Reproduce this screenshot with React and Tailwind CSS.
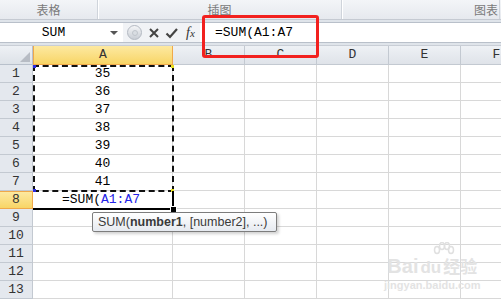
const mono = { fontFamily: '"Liberation Mono", "DejaVu Sans Mono", monospace' };

const cols = [
  { name: 'A', w: 'w-[140px]' },
  { name: 'B', w: 'w-[72px]' },
  { name: 'C', w: 'w-[72px]' },
  { name: 'D', w: 'w-[72px]' },
  { name: 'E', w: 'w-[72px]' },
  { name: 'F', w: 'w-[72px]' },
];

const values = [35, 36, 37, 38, 39, 40, 41];

function Ribbon() {
  return (
    <div className="flex h-[20px] border-b border-[#c5cad2] bg-gradient-to-b from-[#f3f5f8] to-[#e6e9ee] text-[12px] text-[#7a7a7a] font-['Noto_Sans_CJK_SC',sans-serif]">
      <div className="w-[98px] flex items-center justify-center border-r border-[#cfd4db] shadow-[1px_0_0_#fff]">表格</div>
      <div className="w-[244px] flex items-center justify-center border-r border-[#cfd4db] shadow-[1px_0_0_#fff]">插图</div>
      <div className="w-[158px] flex items-center justify-end pr-[1px] border-r border-[#cfd4db]">图表</div>
    </div>
  );
}

function FormulaBar() {
  return (
    <div className="flex h-[26px] py-[2px] bg-[#dfe4ea] border-b border-[#c9ced6]">
      <div className="w-[123px] bg-white border-y border-[#b9c0ca] flex items-center relative" style={mono}>
        <span className="flex-1 text-center text-[13px] text-black pr-[16px]">SUM</span>
        <span className="absolute right-[5px] top-[8px] w-0 h-0 border-l-[4px] border-r-[4px] border-t-[4px] border-l-transparent border-r-transparent border-t-[#555]" />
      </div>
      <div className="w-[77px] flex items-center bg-[#f1f3f6] border-y border-[#b9c0ca]">
        <div className="ml-[4px] w-[15px] h-[15px] rounded-full bg-gradient-to-b from-[#f4f5f7] to-[#c9ced5] border border-[#b3b9c2] flex items-center justify-center">
          <div className="w-[6px] h-[6px] rounded-full bg-[#d9dde2] border border-[#c0c5cc]" />
        </div>
        <svg width="12" height="12" viewBox="0 0 12 12" className="ml-[6px]">
          <path d="M2 2 L10 10 M10 2 L2 10" stroke="#444" strokeWidth="2" />
        </svg>
        <svg width="13" height="12" viewBox="0 0 13 12" className="ml-[5px]">
          <path d="M1.5 6.5 L5 10 L12 2" stroke="#444" strokeWidth="2.2" fill="none" />
        </svg>
        <span className="ml-[8px] text-[14px] italic text-[#333] font-['Liberation_Serif',serif] leading-none">
          f<span className="text-[11px]">x</span>
        </span>
      </div>
      <div className="flex-1 bg-white border-y border-[#b9c0ca] flex items-center pl-[15px] text-[13px] text-black" style={mono}>
        =SUM(A1:A7
      </div>
    </div>
  );
}

function Grid() {
  return (
    <div className="relative" style={mono}>
      <div className="flex h-[19px] text-[13px] text-[#333]">
        <div className="w-[33px] shrink-0 bg-gradient-to-b from-[#eef1f5] to-[#dde2e8] border-r border-b border-[#b8c0cb] relative">
          <svg width="10" height="10" className="absolute right-[2px] bottom-[2px]"><path d="M10 0 L10 10 L0 10 Z" fill="#b7bcc4" /></svg>
        </div>
        {cols.map((c) =>
          c.name === 'A' ? (
            <div key={c.name} className={`${c.w} shrink-0 flex items-center justify-center bg-gradient-to-b from-[#fde9a0] to-[#f8d565] border-x border-b border-[#f0a94a]`}>
              {c.name}
            </div>
          ) : (
            <div key={c.name} className={`${c.w} shrink-0 flex items-center justify-center bg-gradient-to-b from-[#eef1f5] to-[#dfe3e9] border-r border-b border-[#c3c9d1]`}>
              {c.name}
            </div>
          )
        )}
      </div>
      {Array.from({ length: 13 }, (_, i) => {
        const r = i + 1;
        const sel = r === 8;
        return (
          <div key={r} className="flex h-[18px] text-[13px]">
            <div
              className={
                sel
                  ? 'w-[33px] shrink-0 flex items-center justify-center bg-gradient-to-b from-[#fde9a0] to-[#f8d565] border-y border-r border-[#f0a94a] text-[#333]'
                  : 'w-[33px] shrink-0 flex items-center justify-center bg-[#e4e8ee] border-r border-b border-[#c3c9d1] text-[#333]'
              }
            >
              {r}
            </div>
            {cols.map((c) => (
              <div key={c.name} className={`${c.w} shrink-0 flex items-center justify-center border-r border-b border-[#d8d8d8] text-black`}>
                {c.name === 'A' && r <= 7 ? values[r - 1] : null}
                {c.name === 'A' && sel ? (
                  <span className="w-full pl-[29px]">
                    =SUM(<span className="text-[#2323e8]">A1:A7</span>
                  </span>
                ) : null}
              </div>
            ))}
          </div>
        );
      })}

      {/* copy-range marquee */}
      <div className="absolute left-[33px] top-[19px] w-[141px] h-[127px] border-2 border-dashed border-[#111]" />
      <div className="absolute left-[33px] top-[19px] w-[3px] h-[3px] bg-[#2a2ae0]" />
      <div className="absolute left-[171px] top-[19px] w-[3px] h-[3px] bg-[#e8e020]" />
      <div className="absolute left-[33px] top-[143px] w-[3px] h-[3px] bg-[#2a2ae0]" />
      <div className="absolute left-[171px] top-[143px] w-[3px] h-[3px] bg-[#e8e020]" />

      {/* active cell */}
      <div className="absolute left-[33px] top-[145px] w-[141px] h-[19px] border-b-2 border-r-2 border-black" />
      <div className="absolute left-[171px] top-[161px] w-[5px] h-[5px] bg-black outline outline-1 outline-white" />

      {/* function tooltip */}
      <div className="absolute left-[92px] top-[166px] w-[185px] h-[20px] rounded-[2px] border border-[#7d7d7d] bg-gradient-to-b from-white to-[#e6eaf0] shadow-[2px_2px_3px_rgba(0,0,0,0.18)] flex items-center pl-[5px] text-[12.5px] text-[#3a3a3a] font-['Liberation_Sans',sans-serif] whitespace-nowrap">
        SUM(<b className="font-bold">number1</b>, [number2], ...)
      </div>

      {/* watermark */}
      <div className="absolute left-[384px] top-[196px] flex flex-col items-center text-[#e3e3e3] font-['Liberation_Sans',sans-serif] pointer-events-none">
        <svg width="26" height="16" viewBox="0 0 26 16" className="ml-[22px]">
          <g fill="none" stroke="#e0e0e0" strokeWidth="1.5">
            <ellipse cx="7" cy="8" rx="2.5" ry="3.5" />
            <ellipse cx="12" cy="4" rx="2.5" ry="3.5" />
            <ellipse cx="17" cy="4" rx="2.5" ry="3.5" />
            <ellipse cx="21" cy="8" rx="2.5" ry="3.5" />
          </g>
        </svg>
        <div className="flex items-baseline leading-none -mt-[2px]">
          <span className="text-[20px] font-bold">Bai</span>
          <span className="text-[17px] font-bold mx-[2px]">du</span>
          <span className="text-[17px] font-bold font-['Noto_Sans_CJK_SC',sans-serif]">经验</span>
        </div>
        <div className="text-[11px] font-bold leading-none mt-[4px]">jingyan.baidu.com</div>
      </div>
    </div>
  );
}

export default function App() {
  return (
    <div className="w-[501px] h-[299px] overflow-hidden bg-white relative">
      <Ribbon />
      <FormulaBar />
      <Grid />
      <div className="absolute left-[202px] top-[15px] w-[117px] h-[43px] border-[3px] border-[#f2211f] rounded-[3px]" />
    </div>
  );
}
